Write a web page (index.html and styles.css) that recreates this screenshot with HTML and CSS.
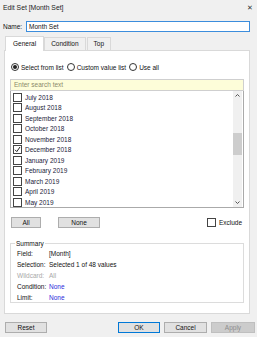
FILE: index.html
```html
<!DOCTYPE html>
<html lang="en">
<head>
    <meta charset="UTF-8">
    <title>Edit Set [Month Set]</title>
    <link rel="stylesheet" href="styles.css">
</head>
<body>

<div class="dialog">
    <div class="titlebar">
        <span>Edit Set [Month Set]</span>
        <span class="close">&#x2715;</span>
    </div>

    <div class="name-row">
        <label>Name:</label>
        <div class="name-input">Month Set</div>
    </div>

    <div class="tabs">
        <div class="tab active">General</div>
        <div class="tab">Condition</div>
        <div class="tab">Top</div>
    </div>

    <div class="panel">
        <div class="radios">
            <span class="radio checked"></span><span class="radio-label">Select from list</span>
            <span class="radio"></span><span class="radio-label">Custom value list</span>
            <span class="radio"></span><span class="radio-label">Use all</span>
        </div>

        <div class="search">Enter search text</div>
        <div class="list">
            <div class="items">
                <div class="item"><span class="box"></span>July 2018</div>
                <div class="item"><span class="box"></span>August 2018</div>
                <div class="item"><span class="box"></span>September 2018</div>
                <div class="item"><span class="box"></span>October 2018</div>
                <div class="item"><span class="box"></span>November 2018</div>
                <div class="item"><span class="box checked"><svg width="7" height="7" viewBox="0 0 7 7"><path d="M1 3.8 L2.8 5.6 L6 1" fill="none" stroke="#222" stroke-width="1"/></svg></span>December 2018</div>
                <div class="item"><span class="box"></span>January 2019</div>
                <div class="item"><span class="box"></span>February 2019</div>
                <div class="item"><span class="box"></span>March 2019</div>
                <div class="item"><span class="box"></span>April 2019</div>
                <div class="item"><span class="box"></span>May 2019</div>
            </div>
            <div class="scrollbar">
                <div class="arrow"><svg width="5" height="3" viewBox="0 0 5 3"><path d="M0.5 2.5 L2.5 0.5 L4.5 2.5" fill="none" stroke="#555" stroke-width="1"/></svg></div>
                <div class="track"><div class="thumb"></div></div>
                <div class="arrow"><svg width="5" height="3" viewBox="0 0 5 3"><path d="M0.5 0.5 L2.5 2.5 L4.5 0.5" fill="none" stroke="#555" stroke-width="1"/></svg></div>
            </div>
        </div>

        <div class="list-actions">
            <button class="btn btn-all">All</button>
            <button class="btn btn-none">None</button>
            <span class="spacer"></span>
            <span class="box"></span><span class="exclude">Exclude</span>
        </div>

        <fieldset class="summary">
            <legend>Summary</legend>
            <div class="row"><span class="key">Field:</span><span>[Month]</span></div>
            <div class="row"><span class="key">Selection:</span><span>Selected 1 of 48 values</span></div>
            <div class="row muted"><span class="key">Wildcard:</span><span>All</span></div>
            <div class="row"><span class="key">Condition:</span><span class="link">None</span></div>
            <div class="row"><span class="key">Limit:</span><span class="link">None</span></div>
        </fieldset>
    </div>

    <div class="footer">
        <button class="btn btn-reset">Reset</button>
        <span class="spacer"></span>
        <button class="btn btn-ok">OK</button>
        <button class="btn btn-cancel">Cancel</button>
        <button class="btn btn-apply" disabled>Apply</button>
    </div>
</div>

</body>
</html>
```

FILE: styles.css
```css
body {
    margin: 0;
    padding: 0;
    background-color: #f0f0f0;
    font-family: "Liberation Sans", Arial, sans-serif;
    font-size: 6.5px;
    color: #111;
}

.dialog {
    width: 257px;
    height: 337px;
    display: flex;
    flex-direction: column;
}

.titlebar {
    height: 15px;
    display: flex;
    align-items: center;
    justify-content: space-between;
    padding: 0 4px 0 3px;
    font-size: 6.8px;
    color: #222;
}

.close {
    font-size: 7px;
    color: #333;
}

.name-row {
    display: flex;
    align-items: center;
    margin-top: 6px;
    padding-left: 3px;
}

.name-row label {
    width: 23px;
}

.name-input {
    width: 220px;
    height: 9px;
    line-height: 9px;
    padding-left: 2px;
    border: 1px solid #3c8ddc;
    background-color: white;
}

.tabs {
    display: flex;
    align-items: flex-end;
    margin-top: 3px;
    padding-left: 5px;
    height: 15px;
}

.tab {
    height: 12px;
    line-height: 12px;
    padding: 0 6px;
    border: 1px solid #d9d9d9;
    border-bottom: none;
    background-color: #f0f0f0;
    margin-right: 1px;
}

.tab.active {
    height: 14px;
    line-height: 14px;
    background-color: white;
    padding: 0 7px;
    margin-right: 0;
    position: relative;
    top: 1px;
}

.panel {
    margin-left: 4px;
    width: 246px;
    height: 264px;
    background-color: white;
    border: 1px solid #d9d9d9;
    padding: 0 5px;
    box-sizing: border-box;
    display: flex;
    flex-direction: column;
}

.radios {
    display: flex;
    align-items: center;
    margin-top: 12px;
    padding-left: 1px;
}

.radio {
    width: 6px;
    height: 6px;
    border: 1px solid #333;
    border-radius: 50%;
    display: inline-flex;
    align-items: center;
    justify-content: center;
    margin-right: 2px;
}

.radio.checked::after {
    content: "";
    width: 4px;
    height: 4px;
    border-radius: 50%;
    background-color: #222;
}

.radio-label {
    margin-right: 3px;
}

.search {
    margin-top: 8px;
    height: 10px;
    line-height: 10px;
    padding-left: 3px;
    background-color: #fdfdd9;
    border: 1px solid #cfcfcf;
    color: #8a8a6a;
}

.list {
    height: 116px;
    border: 1px solid #aaaaaa;
    border-top: none;
    display: flex;
    overflow: hidden;
}

.items {
    flex: 1;
    padding-top: 1px;
    padding-left: 2px;
}

.item {
    display: flex;
    align-items: center;
    height: 10.5px;
    color: #1a1a3a;
}

.box {
    width: 7px;
    height: 7px;
    border: 1px solid #444;
    background-color: white;
    margin-right: 3px;
    display: inline-flex;
    align-items: center;
    justify-content: center;
}

.scrollbar {
    width: 9px;
    background-color: #f0f0f0;
    display: flex;
    flex-direction: column;
    margin-right: 1px;
}

.arrow {
    height: 9px;
    display: flex;
    align-items: center;
    justify-content: center;
}

.track {
    flex: 1;
    padding-top: 33px;
}

.thumb {
    height: 22px;
    background-color: #cdcdcd;
}

.list-actions {
    display: flex;
    align-items: center;
    margin-top: 9px;
    padding-left: 1px;
}

.btn {
    font-family: "Liberation Sans", Arial, sans-serif;
    font-size: 6.5px;
    height: 11px;
    padding: 0;
    border: 1px solid #adadad;
    background-color: #e1e1e1;
    color: #111;
}

.btn-all {
    width: 30px;
}

.btn-none {
    width: 42px;
    margin-left: 17px;
}

.spacer {
    flex: 1;
}

.exclude {
    margin-right: 2px;
}

.summary {
    margin: 12px 0 0 0;
    padding: 1px 0 0 6px;
    height: 60px;
    border: 1px solid #dcdcdc;
}

.summary legend {
    padding: 0 1px;
    margin-left: -2px;
}

.row {
    display: flex;
    height: 11px;
    align-items: center;
}

.key {
    width: 32px;
}

.muted {
    color: #a8a8a8;
}

.link {
    color: #2b2bdb;
}

.footer {
    display: flex;
    align-items: center;
    margin-top: 8px;
    padding: 0 2px 0 5px;
}

.btn-reset {
    width: 42px;
}

.btn-ok {
    width: 42px;
    border-color: #0078d7;
}

.btn-cancel {
    width: 43px;
    margin-left: 4px;
}

.btn-apply {
    width: 44px;
    margin-left: 4px;
    background-color: #cccccc;
    border-color: #bfbfbf;
    color: #8d8d8d;
}
```
